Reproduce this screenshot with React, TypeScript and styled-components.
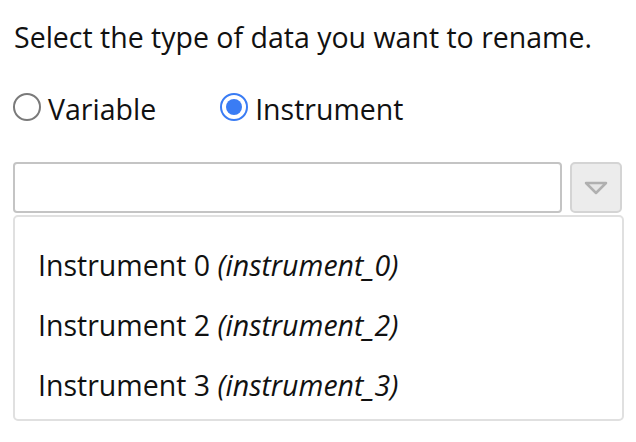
import React from "react";
import styled, { createGlobalStyle } from "styled-components";

const Global = createGlobalStyle`
  html, body { margin: 0; padding: 0; background: #fff; }
  body { font-family: "Open Sans", "Noto Sans", sans-serif; color: #111; }
`;

const Page = styled.div`
  padding: 19px 12px 0 13px;
  display: flex;
  flex-direction: column;
`;

const Heading = styled.p`
  margin: 0 0 0 1px;
  font-size: 28.5px;
  line-height: 36px;
`;

const RadioRow = styled.div`
  display: flex;
  align-items: flex-start;
  margin-top: 36px;
  height: 36px;
`;

const RadioLabel = styled.label<{ $gap: number }>`
  display: flex;
  align-items: flex-start;
  gap: 7px;
  font-size: 28.5px;
  line-height: 36px;
  margin-right: ${(p) => p.$gap}px;
`;

const Circle = styled.span<{ $checked?: boolean }>`
  box-sizing: border-box;
  width: 28px;
  height: 28px;
  margin-top: 2px;
  border-radius: 50%;
  background: #fff;
  border: ${(p) => (p.$checked ? "2.5px solid #3a7cf4" : "2px solid #7a7a7a")};
  display: flex;
  align-items: center;
  justify-content: center;
  &::after {
    content: "";
    display: ${(p) => (p.$checked ? "block" : "none")};
    width: 16px;
    height: 16px;
    border-radius: 50%;
    background: #3a7cf4;
  }
`;

const Combo = styled.div`
  display: flex;
  gap: 8px;
  margin-top: 35px;
  padding-right: 2px;
`;

const Input = styled.input`
  box-sizing: border-box;
  flex: 1;
  height: 51px;
  border: 2px solid #c4c4c4;
  border-radius: 4px;
  background: #fff;
  font-family: inherit;
  font-size: 24px;
  outline: none;
`;

const ToggleButton = styled.button`
  box-sizing: border-box;
  width: 52px;
  height: 51px;
  border: 2px solid #d4d4d4;
  border-radius: 5px;
  background: #ececec;
  padding: 0;
  display: flex;
  align-items: center;
  justify-content: center;
`;

const List = styled.ul`
  box-sizing: border-box;
  list-style: none;
  margin: 2px 0 0;
  padding: 18px 0 4px;
  border: 2px solid #e0e0e0;
  border-radius: 5px;
  background: #fff;
`;

const Item = styled.li`
  padding: 12px 23px;
  font-size: 28.5px;
  line-height: 36px;
`;

const Key = styled.i`
  font-style: italic;
`;

const items = [
  { name: "Instrument 0", key: "instrument_0" },
  { name: "Instrument 2", key: "instrument_2" },
  { name: "Instrument 3", key: "instrument_3" },
];

export default function App() {
  return (
    <>
      <Global />
      <Page>
        <Heading>Select the type of data you want to rename.</Heading>
        <RadioRow>
          <RadioLabel $gap={64}>
            <Circle />
            Variable
          </RadioLabel>
          <RadioLabel $gap={0}>
            <Circle $checked />
            Instrument
          </RadioLabel>
        </RadioRow>
        <Combo>
          <Input type="text" />
          <ToggleButton aria-label="Toggle">
            <svg width="26" height="16" viewBox="0 0 26 16">
              <path
                d="M3 3 H23 L13 13 Z"
                fill="#e6e6e6"
                stroke="#b0b0b0"
                strokeWidth="2.5"
                strokeLinejoin="round"
              />
            </svg>
          </ToggleButton>
        </Combo>
        <List>
          {items.map((it) => (
            <Item key={it.key}>
              {it.name} <Key>({it.key})</Key>
            </Item>
          ))}
        </List>
      </Page>
    </>
  );
}
